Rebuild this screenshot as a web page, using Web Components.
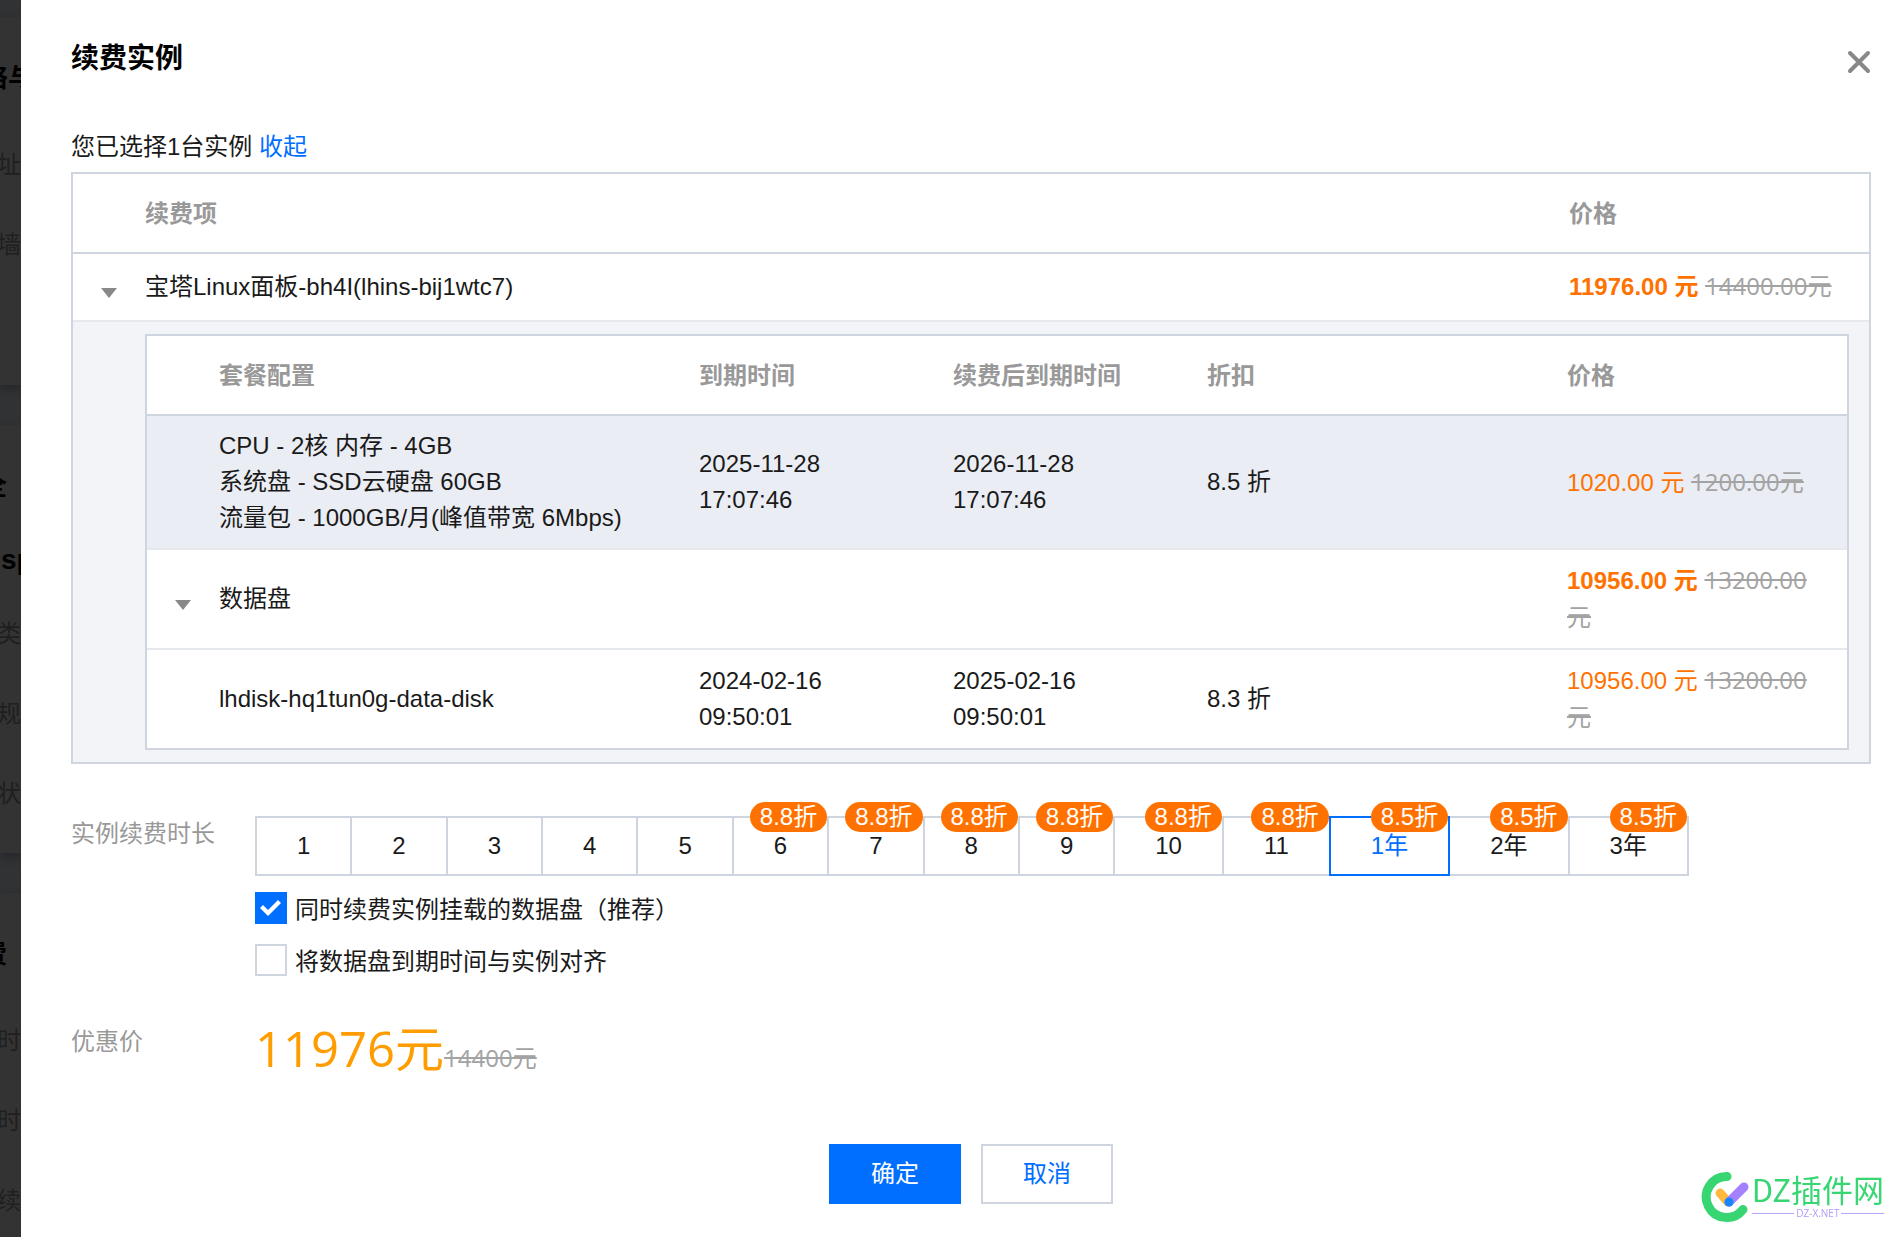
<!DOCTYPE html>
<html lang="zh-CN">
<head>
<meta charset="utf-8">
<meta name="viewport" content="width=device-width, initial-scale=1">
<title>续费实例</title>
<style>
  html, body { margin: 0; height: 100%; }
  body {
    --line: #cfd5de;
    --line-soft: #e5e8ed;
    --muted: #999;
    --brand: #006eff;
    --orange: #ff7200;
    font: 24px/36px "Liberation Sans", "Noto Sans CJK SC", sans-serif;
    color: #1a1a1a;
    background: #fff;
  }
</style>
</head>
<body>
<renew-page></renew-page>

<script>
const define = (name, html, setup) => {
  const template = document.createElement('template');
  template.innerHTML = html;
  customElements.define(name, class extends HTMLElement {
    connectedCallback() {
      if (this.shadowRoot) return;
      const root = this.attachShadow({ mode: 'open' });
      root.append(template.content.cloneNode(true));
      if (setup) setup(this, root);
    }
  });
};

/* One card of the dimmed page behind the dialog */
define('dim-card', `
  <style>
    :host { display: block; padding-top: 43px; background: #333; border-top: 1px solid #2e2f31; color: #1f1f1f; box-shadow: 0 4px 8px #26272b; white-space: nowrap; }
    .head { display: flex; justify-content: flex-end; font-size: 26px; font-weight: 700; color: #000; }
    .body { display: flex; flex-direction: column; align-items: flex-end; gap: 44px; }
  </style>
  <div class="head"><slot name="head"></slot></div>
  <div class="body"><slot></slot></div>
`);

define('dim-backdrop', `
  <style>
    :host { display: flex; flex-direction: column; gap: 39px; box-sizing: border-box; width: 21px; height: 1237px; padding-top: 16px; overflow: hidden; background: #303233; flex: none; }
    dim-card { flex: none; }
    .wide { width: 39px; }
    .short { padding-right: 14px; }
    .site { align-self: flex-start; margin-top: 38px; padding-left: 1px; font-size: 28px; font-weight: 700; color: #000; }
    .net { height: 325px; }
    .sec { height: 385px; }
    .fee { height: 400px; }
    .first { margin-top: 51px; }
    .after { margin-top: -6px; }
  </style>
  <dim-card class="net"><span slot="head" class="wide"><span>络与</span></span><span class="first">址</span><span>墙</span></dim-card>
  <dim-card class="sec"><span slot="head" class="short">全</span><span class="site">sp</span><span class="after">类</span><span>规</span><span>状</span></dim-card>
  <dim-card class="fee"><span slot="head" class="short">费</span><span class="first">时</span><span>时</span><span>续</span></dim-card>
`);

define('price-tag', `
  <style>
    :host { display: inline; color: var(--orange); }
    :host([strong]) b { font-weight: 700; }
    b { font-weight: 400; }
    del { font-family: "Open Sans", "Noto Sans CJK SC", sans-serif; line-height: 24px; color: #a3a3a3; }
  </style>
  <b><slot></slot></b> <del></del>
`, (host, root) => { root.querySelector('del').textContent = host.getAttribute('was'); });

define('toggle-arrow', `
  <style>
    :host { display: flex; justify-content: center; padding-left: 20px; }
    button { display: flex; padding: 0; border: 0; background: none; cursor: pointer; }
    svg { width: 16px; height: 22px; }
  </style>
  <button type="button" aria-label="收起明细" aria-expanded="true"><svg viewBox="0 0 16 22"><path d="M0 12h16l-8 10z" fill="#888"/></svg></button>
`);

define('renew-table', `
  <style>
    :host { display: block; }
    table { width: 100%; table-layout: fixed; border-collapse: separate; border-spacing: 0; border: 2px solid var(--line); background: #fff; }
    th, td { padding: 0 20px; text-align: left; vertical-align: middle; border-bottom: 2px solid var(--line-soft); }
    th { height: 76px; padding-top: 2px; color: var(--muted); font-weight: 700; border-color: var(--line); }
    td { height: 66px; }
    tr:last-child > td { border-bottom: 0; }
    .arrow { width: 52px; padding-left: 0; padding-right: 0; }
    .total { width: 280px; }
    .nest { padding: 12px 20px 12px 72px; background: #f2f4f8; }
    .nest td { height: auto; padding-top: 12px; padding-bottom: 12px; }
    .nest .price { line-height: 37px; }
    .date { width: 214px; }
    .rate { width: 320px; }
    .cost { width: 260px; }
    .plan td { background: #eaedf3; }
    .time { width: 150px; }
  </style>
  <table>
    <thead><tr><th class="arrow"></th><th>续费项</th><th class="total">价格</th></tr></thead>
    <tbody>
      <tr>
        <td class="arrow"><toggle-arrow></toggle-arrow></td>
        <td>宝塔Linux面板-bh4I(lhins-bij1wtc7)</td>
        <td><price-tag strong was="14400.00元">11976.00 元</price-tag></td>
      </tr>
      <tr>
        <td class="nest" colspan="3">
          <table>
            <thead><tr><th class="arrow"></th><th>套餐配置</th><th class="date">到期时间</th><th class="date">续费后到期时间</th><th class="rate">折扣</th><th class="cost">价格</th></tr></thead>
            <tbody>
              <tr class="plan">
                <td class="arrow"></td>
                <td>CPU - 2核 内存 - 4GB<br>系统盘 - SSD云硬盘 60GB<br>流量包 - 1000GB/月(峰值带宽 6Mbps)</td>
                <td><div class="time">2025-11-28 17:07:46</div></td>
                <td><div class="time">2026-11-28 17:07:46</div></td>
                <td>8.5 折</td>
                <td class="price"><price-tag was="1200.00元">1020.00 元</price-tag></td>
              </tr>
              <tr>
                <td class="arrow"><toggle-arrow></toggle-arrow></td>
                <td colspan="4">数据盘</td>
                <td class="price"><price-tag strong was="13200.00元">10956.00 元</price-tag></td>
              </tr>
              <tr>
                <td class="arrow"></td>
                <td>lhdisk-hq1tun0g-data-disk</td>
                <td><div class="time">2024-02-16 09:50:01</div></td>
                <td><div class="time">2025-02-16 09:50:01</div></td>
                <td>8.3 折</td>
                <td class="price"><price-tag was="13200.00元">10956.00 元</price-tag></td>
              </tr>
            </tbody>
          </table>
        </td>
      </tr>
    </tbody>
  </table>
`);

define('duration-option', `
  <style>
    :host { display: block; position: relative; }
    :host(:not(:first-child)) { margin-left: -2px; }
    :host([selected]) { z-index: 1; }
    button { box-sizing: border-box; height: 60px; padding: 0 40px; border: 2px solid var(--line); background: #fff; font: inherit; color: inherit; white-space: nowrap; cursor: pointer; }
    :host([selected]) button { border-color: var(--brand); color: var(--brand); }
    .off { position: absolute; right: 2px; top: -14px; padding: 0 10px; border-radius: 15px; line-height: 30px; background: var(--orange); color: #fff; white-space: nowrap; pointer-events: none; }
  </style>
  <button type="button"><slot></slot></button>
`, (host, root) => {
  if (host.hasAttribute('off')) {
    const badge = document.createElement('span');
    badge.className = 'off';
    badge.textContent = host.getAttribute('off');
    root.append(badge);
  }
  root.querySelector('button').setAttribute('aria-pressed', host.hasAttribute('selected'));
});

define('check-option', `
  <style>
    :host { display: block; }
    label { display: flex; align-items: center; gap: 8px; height: 32px; cursor: pointer; }
    input { appearance: none; box-sizing: border-box; flex: none; width: 32px; height: 32px; margin: 0; border: 2px solid var(--line); background: #fff; }
    input:checked { border: 0; background: var(--brand); }
    input:checked::before { content: ""; display: block; width: 32px; height: 32px; background: #fff; clip-path: polygon(5px 16px, 8px 13px, 13px 18px, 23px 8px, 26px 11px, 13px 24px); }
    span { padding-top: 4px; }
  </style>
  <label for="box"><input id="box" type="checkbox"><span><slot></slot></span></label>
`, (host, root) => { root.querySelector('input').checked = host.hasAttribute('checked'); });

define('form-row', `
  <style>
    :host { display: grid; grid-template-columns: 184px 1fr; }
    .name { color: var(--muted); }
  </style>
  <div class="name"><slot name="name"></slot></div>
  <div><slot></slot></div>
`);

define('action-button', `
  <style>
    :host { display: block; }
    button { box-sizing: border-box; width: 132px; height: 60px; padding: 0; border: 2px solid var(--line); background: #fff; font: inherit; color: var(--brand); cursor: pointer; }
    :host([primary]) button { border-color: var(--brand); background: var(--brand); color: #fff; }
  </style>
  <button type="button"><slot></slot></button>
`);

define('site-mark', `
  <style>
    :host { position: fixed; right: 18px; bottom: 14px; display: flex; align-items: center; gap: 1px; font-family: "Noto Sans CJK SC", sans-serif; }
    svg { width: 50px; height: 52px; }
    .words { padding-bottom: 4px; }
    .name { font-size: 31px; line-height: 36px; color: #38d672; white-space: nowrap; }
    .url { display: flex; align-items: center; gap: 2px; font: 10px/12px "Open Sans", sans-serif; color: #b39bf8; }
    .url::before, .url::after { content: ""; flex: 1; height: 1px; background: #b9a2fa; }
  </style>
  <svg viewBox="0 0 50 52" fill="none" stroke-linecap="round" stroke-width="9">
    <path d="M26 5.500A20.500 20.500 0 1 0 42 38.500" stroke="#38d672"/>
    <path d="M19 22l8 9" stroke="#ffb93e"/>
    <path d="M43 16L28 31" stroke="#a481ff"/>
    <circle cx="28" cy="31" r="4.500" fill="#1687ff"/>
  </svg>
  <div class="words"><div class="name">DZ插件网</div><div class="url">DZ-X.NET</div></div>
`);

define('renew-page', `
  <style>
    :host { display: flex; min-height: 100vh; overflow: hidden; }
    main { flex: 1; min-width: 0; padding: 41px 31px 32px 50px; }
    header { display: flex; justify-content: space-between; align-items: flex-start; padding-bottom: 52px; }
    h1 { margin: 0; font-size: 28px; line-height: 36px; color: #000; }
    .close { display: flex; margin-top: 8px; padding: 0; border: 0; background: none; cursor: pointer; }
    .close svg { width: 24px; height: 26px; }
    p { margin: 0 0 7px; }
    a { color: var(--brand); text-decoration: none; }
    .term { margin-top: 52px; }
    .segments { display: flex; }
    .checks { display: flex; flex-direction: column; gap: 20px; margin-top: 16px; }
    .sum { margin-top: 48px; }
    .amount { display: flex; align-items: baseline; height: 72px; line-height: 48px; font-family: "Open Sans", "Noto Sans CJK SC", sans-serif; color: #ff9d00; }
    .amount strong { font-size: 49px; font-weight: 400; }
    .amount del { color: #a3a3a3; }
    footer { display: flex; justify-content: center; gap: 20px; margin-top: 48px; }
  </style>
  <dim-backdrop></dim-backdrop>
  <main>
    <header>
      <h1>续费实例</h1>
      <button class="close" type="button" aria-label="关闭"><svg viewBox="0 0 24 26" fill="none" stroke="#888" stroke-width="4" stroke-linecap="round"><path d="M3 4l18 18M21 4L3 22"/></svg></button>
    </header>
    <p>您已选择1台实例 <a href="#">收起</a></p>
    <renew-table></renew-table>
    <form-row class="term">
      <span slot="name">实例续费时长</span>
      <div class="segments">
        <duration-option>1</duration-option><duration-option>2</duration-option><duration-option>3</duration-option><duration-option>4</duration-option><duration-option>5</duration-option><duration-option off="8.8折">6</duration-option><duration-option off="8.8折">7</duration-option><duration-option off="8.8折">8</duration-option><duration-option off="8.8折">9</duration-option><duration-option off="8.8折">10</duration-option><duration-option off="8.8折">11</duration-option><duration-option off="8.5折" selected>1年</duration-option><duration-option off="8.5折">2年</duration-option><duration-option off="8.5折">3年</duration-option>
      </div>
      <div class="checks">
        <check-option checked>同时续费实例挂载的数据盘（推荐）</check-option>
        <check-option>将数据盘到期时间与实例对齐</check-option>
      </div>
    </form-row>
    <form-row class="sum">
      <span slot="name">优惠价</span>
      <div class="amount"><strong>11976元</strong><del>14400元</del></div>
    </form-row>
    <footer><action-button primary>确定</action-button><action-button>取消</action-button></footer>
  </main>
  <site-mark></site-mark>
`);
</script>
</body>
</html>
